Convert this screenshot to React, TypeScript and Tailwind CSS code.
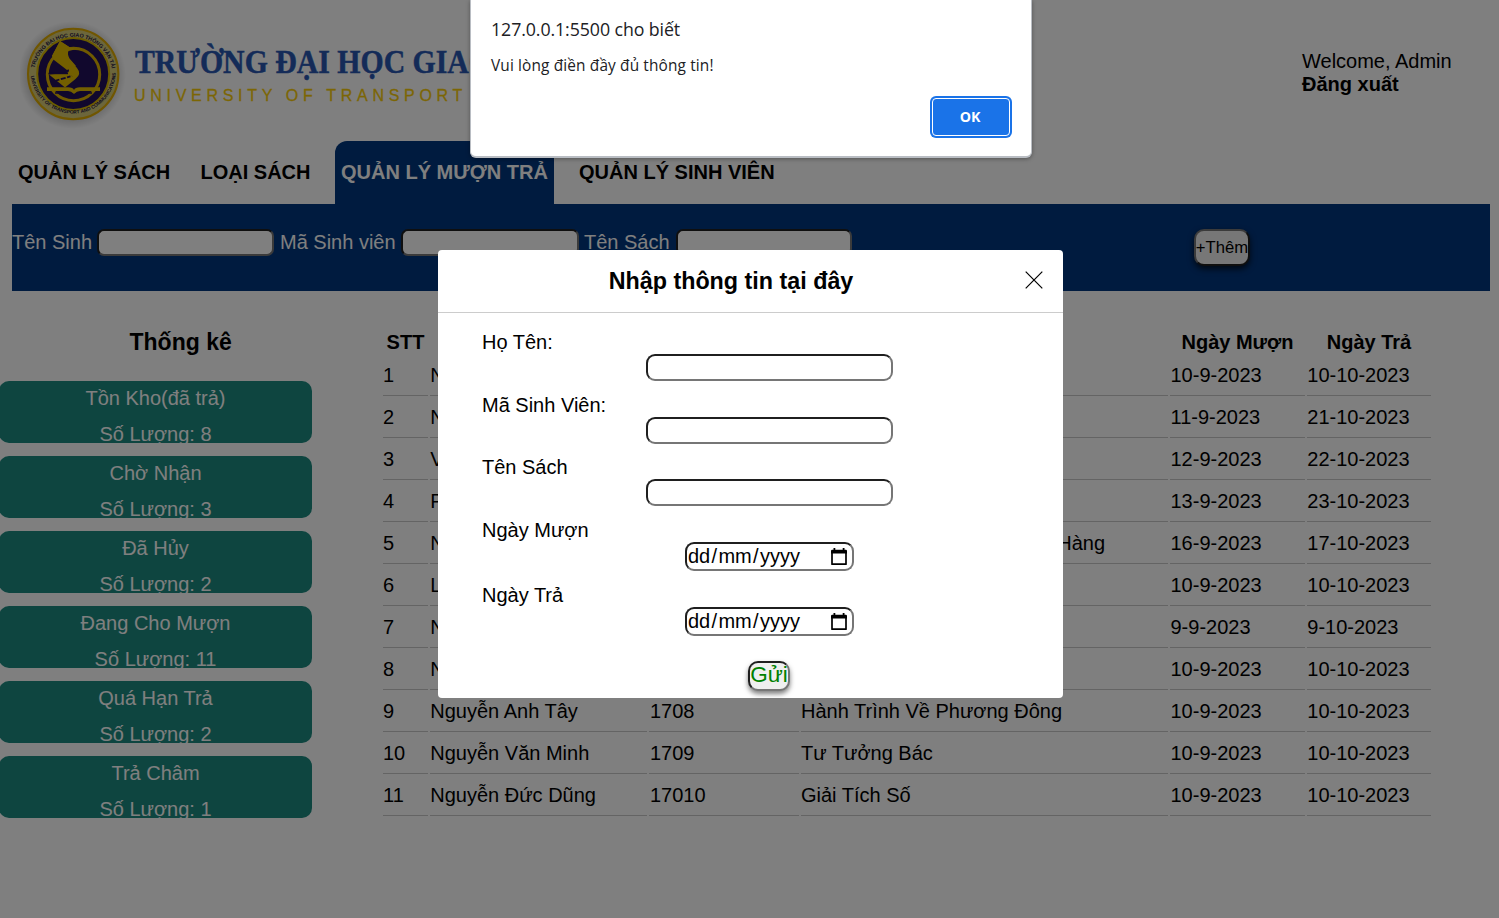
import React from "react";

const stats = [
  { label: "Tồn Kho(đã trả)", count: 8 },
  { label: "Chờ Nhận", count: 3 },
  { label: "Đã Hủy", count: 2 },
  { label: "Đang Cho Mượn", count: 11 },
  { label: "Quá Hạn Trả", count: 2 },
  { label: "Trả Châm", count: 1 },
];

type Row = [string, string, string, string, string];

const rows: Row[] = [
  ["N", "", "", "10-9-2023", "10-10-2023"],
  ["N", "", "", "11-9-2023", "21-10-2023"],
  ["V", "", "", "12-9-2023", "22-10-2023"],
  ["P", "", "", "13-9-2023", "23-10-2023"],
  ["N", "", "Hàng", "16-9-2023", "17-10-2023"],
  ["L", "", "", "10-9-2023", "10-10-2023"],
  ["N", "", "", "9-9-2023", "9-10-2023"],
  ["N", "", "", "10-9-2023", "10-10-2023"],
  ["Nguyễn Anh Tây", "1708", "Hành Trình Về Phương Đông", "10-9-2023", "10-10-2023"],
  ["Nguyễn Văn Minh", "1709", "Tư Tưởng Bác", "10-9-2023", "10-10-2023"],
  ["Nguyễn Đức Dũng", "17010", "Giải Tích Số", "10-9-2023", "10-10-2023"],
];

const inset =
  "box-border border-2 border-t-[#1f1f1f] border-l-[#1f1f1f] border-r-[#767676] border-b-[#767676] bg-white outline-none";

function Logo() {
  return (
    <svg width="110" height="110" viewBox="0 0 110 110" className="shrink-0 overflow-visible">
      <defs>
        <radialGradient id="halo">
          <stop offset="0.8" stopColor="#000" stopOpacity="0.18" />
          <stop offset="1" stopColor="#000" stopOpacity="0" />
        </radialGradient>
        <path id="arcTop" d="M13.8 56 A39.3 39.3 0 0 1 92.4 56" />
        <path id="arcBottom" d="M10.6 54 A42.6 42.6 0 0 0 95.6 54" />
      </defs>
      <circle cx="52" cy="55" r="54" fill="url(#halo)" />
      <circle cx="53.2" cy="54" r="45.2" fill="#d8cc78" stroke="#e0ac00" strokeWidth="2" />
      <circle cx="53.2" cy="54" r="36" fill="#22105a" stroke="#d8b800" strokeWidth="2" />
      <circle cx="53.5" cy="54.5" r="26.2" fill="none" stroke="#e0b400" strokeWidth="3" />
      <path
        d="M32 36 L40 21 L50 27.5 Q45.5 33 48.5 38 L57 48 Q62 54 55.5 59 L45 67.5 L29 54.5 L47 53 Q51 51 47 47 L35 38.5 Z"
        fill="#e6be00"
      />
      <path
        d="M32 36 L40 21 L50 27.5 L57 29 L48.5 31 Q47 34 49.5 38.5 L56 46 L47 50 L34 40 Z"
        fill="#e6be00"
      />
      <path d="M28.5 53.5 H48" stroke="#22105a" strokeWidth="1.4" />
      <path d="M36 60.5 L52 56" stroke="#22105a" strokeWidth="1.8" strokeDasharray="3.5 1.5 5 1.5" />
      <path
        d="M27 67.3 H48 Q53 67.3 54 70 Q55 67.3 60 67.3 H80 V71 H60 Q57 71 54 74 Q51 71 48 71 H27 Z"
        fill="#e6be00"
      />
      <path d="M35 73 H48 Q52 73 54 75.5 Q56 73 60 73 H72" fill="none" stroke="#22105a" strokeWidth="1.4" />
      <text fontSize="5.4" fontFamily="Liberation Sans, sans-serif" fontWeight="700" fill="#1c1440">
        <textPath href="#arcTop" startOffset="8" textLength="108">
          TRƯỜNG ĐẠI HỌC GIAO THÔNG VẬN TẢI
        </textPath>
      </text>
      <text fontSize="4.9" fontFamily="Liberation Sans, sans-serif" fontWeight="700" fill="#1c1440">
        <textPath href="#arcBottom" startOffset="2" textLength="127">
          UNIVERSITY OF TRANSPORT AND COMMUNICATIONS
        </textPath>
      </text>
    </svg>
  );
}

function Header() {
  return (
    <header className="flex h-[141px] pt-[20px]">
      <div className="ml-[20px] flex w-[460px] overflow-hidden">
        <Logo />
        <div className="ml-[4px] flex flex-col whitespace-nowrap pt-[22px]">
          <div className="origin-left scale-x-[0.876] pl-px font-['Liberation_Serif',serif] text-[34px] leading-[40px] font-bold text-[#2856b0] [-webkit-text-stroke:0.5px_#2856b0]">
            TRƯỜNG ĐẠI HỌC GIAO
          </div>
          <div className="mt-[4px] text-[16px] leading-[20px] tracking-[4.7px] text-[#f8cc08] [-webkit-text-stroke:0.3px_#f8cc08]">
            UNIVERSITY OF TRANSPORT
          </div>
        </div>
      </div>
      <div className="ml-auto w-[197px] pt-[30px]">
        <div>Welcome, Admin</div>
        <div className="font-bold">Đăng xuất</div>
      </div>
    </header>
  );
}

function Nav() {
  return (
    <nav className="flex h-[63px] items-center pl-[12px] font-bold whitespace-nowrap">
      <a className="w-[183px] pl-[6px]">QUẢN LÝ SÁCH</a>
      <a className="w-[140px] pl-[5.5px]">LOẠI SÁCH</a>
      <a className="flex h-full w-[219px] items-center rounded-t-[12px] bg-[#00367e] pl-[6px] text-white">
        QUẢN LÝ MƯỢN TRẢ
      </a>
      <a className="pl-[25px]">QUẢN LÝ SINH VIÊN</a>
    </nav>
  );
}

function SearchBar() {
  return (
    <section className="mx-[12px] mr-[9px] flex h-[87px] items-start bg-[#00367e] pt-[25px] text-white">
      <label className="flex w-[268px] whitespace-nowrap">
        <span className="mt-[2px] w-[85px]">Tên Sinh</span>
        <input className={`h-[27px] w-[177px] rounded-[7px] ${inset}`} />
      </label>
      <label className="flex w-[304px] whitespace-nowrap">
        <span className="mt-[2px] w-[121px]">Mã Sinh viên</span>
        <input className={`h-[27px] w-[178px] rounded-[7px] ${inset}`} />
      </label>
      <label className="flex whitespace-nowrap">
        <span className="mt-[2px] w-[91.5px]">Tên Sách</span>
        <input className={`h-[27px] w-[176px] rounded-[7px] ${inset}`} />
      </label>
      <button className="ml-[342.5px] flex h-[37px] w-[56px] items-center justify-center rounded-[10px] border-2 border-t-[#767676] border-r-[#1f1f1f] border-b-[#1f1f1f] border-l-[#767676] bg-[#efefef] text-[16.67px] whitespace-nowrap text-black shadow-[0_3px_6px_rgba(0,0,0,0.7)]">
        +Thêm
      </button>
    </section>
  );
}

function Sidebar() {
  return (
    <aside className="-ml-px w-[384px] shrink-0 pt-[38px]">
      <h3 className="pl-[130.5px] text-[23px] leading-[27px] font-bold">Thống kê</h3>
      <div className="mt-[25px] flex flex-col gap-[13px]">
        {stats.map((s) => (
          <div
            key={s.label}
            className="flex h-[62px] w-[313px] flex-col gap-[13px] overflow-hidden rounded-[10px] bg-[#1c8a80] pt-[6px] text-center text-white"
          >
            <div>{s.label}</div>
            <div>Số Lượng: {s.count}</div>
          </div>
        ))}
      </div>
    </aside>
  );
}

const cell = "h-[40px] border-b border-[#c8c8c8] pt-[8px] whitespace-nowrap";

function LoanTable() {
  return (
    <div className="grid grid-cols-[45px_217px_150px_367px_135px_124px] content-start gap-[2px] pt-[40px]">
      <div className="text-center font-bold">STT</div>
      <div />
      <div />
      <div />
      <div className="text-center font-bold">Ngày Mượn</div>
      <div className="text-center font-bold">Ngày Trả</div>
      {rows.map((r, i) => (
        <React.Fragment key={i}>
          <div className={cell}>{i + 1}</div>
          <div className={`${cell} pl-[0.3px]`}>{r[0]}</div>
          <div className={`${cell} pl-px`}>{r[1]}</div>
          <div className={r[2] === "Hàng" ? `${cell} pr-[63px] text-right` : cell}>{r[2]}</div>
          <div className={`${cell} pl-[0.5px]`}>{r[3]}</div>
          <div className={`${cell} pl-[0.3px]`}>{r[4]}</div>
        </React.Fragment>
      ))}
    </div>
  );
}

function DateField() {
  return (
    <div className={`mx-auto flex h-[29px] w-[169px] items-center rounded-[9px] ${inset}`}>
      <span className="ml-px flex gap-[1.3px]">
        <span>dd</span>
        <span>/</span>
        <span>mm</span>
        <span>/</span>
        <span>yyyy</span>
      </span>
      <svg width="16" height="18" viewBox="0 0 16 18" className="mr-[5px] ml-auto">
        <path d="M1 4.5 V16.2 H15 V4.5" fill="none" stroke="#000" strokeWidth="1.7" strokeLinejoin="round" />
        <path d="M0 3 Q0 1.8 1.2 1.8 H2.5 V0 H4.3 V1.8 H11.7 V0 H13.5 V1.8 H14.8 Q16 1.8 16 3 V5.5 H0 Z" fill="#000" />
      </svg>
    </div>
  );
}

function TextField() {
  return <input className={`mx-auto block h-[27px] w-[247px] rounded-[9px] ${inset}`} />;
}

function Modal() {
  return (
    <div className="absolute top-[250px] left-[438px] flex h-[448px] w-[625px] flex-col rounded-[4px] bg-white">
      <div className="flex h-[63px] shrink-0 border-b border-[#ccc]">
        <h3 className="mt-[18px] w-[586px] text-center text-[23.3px] leading-[27px] font-bold">
          Nhập thông tin tại đây
        </h3>
        <svg width="18" height="18" viewBox="0 0 18 18" className="mt-[20.5px] ml-[1px]">
          <path d="M0.7 0.7 L17.3 17.3 M17.3 0.7 L0.7 17.3" stroke="#000" strokeWidth="1.2" />
        </svg>
      </div>
      <form className="flex flex-col pt-[18px]">
        <div className="h-[63px]">
          <div className="pl-[44px]">Họ Tên:</div>
          <div className="pl-[38px]"><TextField /></div>
        </div>
        <div className="h-[62px]">
          <div className="pl-[44px]">Mã Sinh Viên:</div>
          <div className="pl-[38px]"><TextField /></div>
        </div>
        <div className="h-[63px]">
          <div className="pl-[44px]">Tên Sách</div>
          <div className="pl-[38px]"><TextField /></div>
        </div>
        <div className="h-[65px]">
          <div className="pl-[44px]">Ngày Mượn</div>
          <div className="pl-[38px]"><DateField /></div>
        </div>
        <div className="h-[77px]">
          <div className="pl-[44px]">Ngày Trả</div>
          <div className="pl-[38px]"><DateField /></div>
        </div>
        <button
          type="button"
          className="ml-[310px] flex h-[30px] w-[42px] items-center justify-center rounded-[10px] border-2 border-t-[#1f1f1f] border-r-[#767676] border-b-[#767676] border-l-[#1f1f1f] bg-[#efefef] pb-[2px] text-[22.5px] leading-[24px] text-[#008000] shadow-[0_3px_5px_rgba(0,0,0,0.5)]"
        >
          Gửi
        </button>
      </form>
    </div>
  );
}

function AlertDialog() {
  return (
    <div className="absolute top-0 left-[470px] flex h-[158px] w-[562px] flex-col rounded-b-[6px] border-x border-b-2 border-[#b9bdc3] bg-white pl-[20px] font-['Open_Sans','Noto_Sans',sans-serif] whitespace-nowrap text-[#202124] shadow-[0_1px_4px_rgba(0,0,0,0.35)]">
      <div className="mt-[16px] text-[17.8px] leading-[26px] tracking-[-0.1px]">127.0.0.1:5500 cho biết</div>
      <div className="mt-[13px] text-[15.4px] leading-[22px] tracking-[0.14px]">Vui lòng điền đầy đủ thông tin!</div>
      <button className="mt-[21px] ml-[441px] flex h-[38px] w-[78px] items-center justify-center rounded-[4px] border border-white bg-[#1a73e8] pr-[2px] text-[14.2px] leading-[20px] font-bold text-white shadow-[0_0_0_2px_#1a73e8]">
        OK
      </button>
    </div>
  );
}

export default function App() {
  return (
    <div className="relative h-[918px] w-[1499px] overflow-hidden bg-white font-['Liberation_Sans',Arial,sans-serif] text-[20px] leading-[23px] text-black">
      <Header />
      <Nav />
      <SearchBar />
      <main className="flex">
        <Sidebar />
        <LoanTable />
      </main>
      <div className="absolute inset-0 bg-black/50" />
      <Modal />
      <AlertDialog />
    </div>
  );
}
